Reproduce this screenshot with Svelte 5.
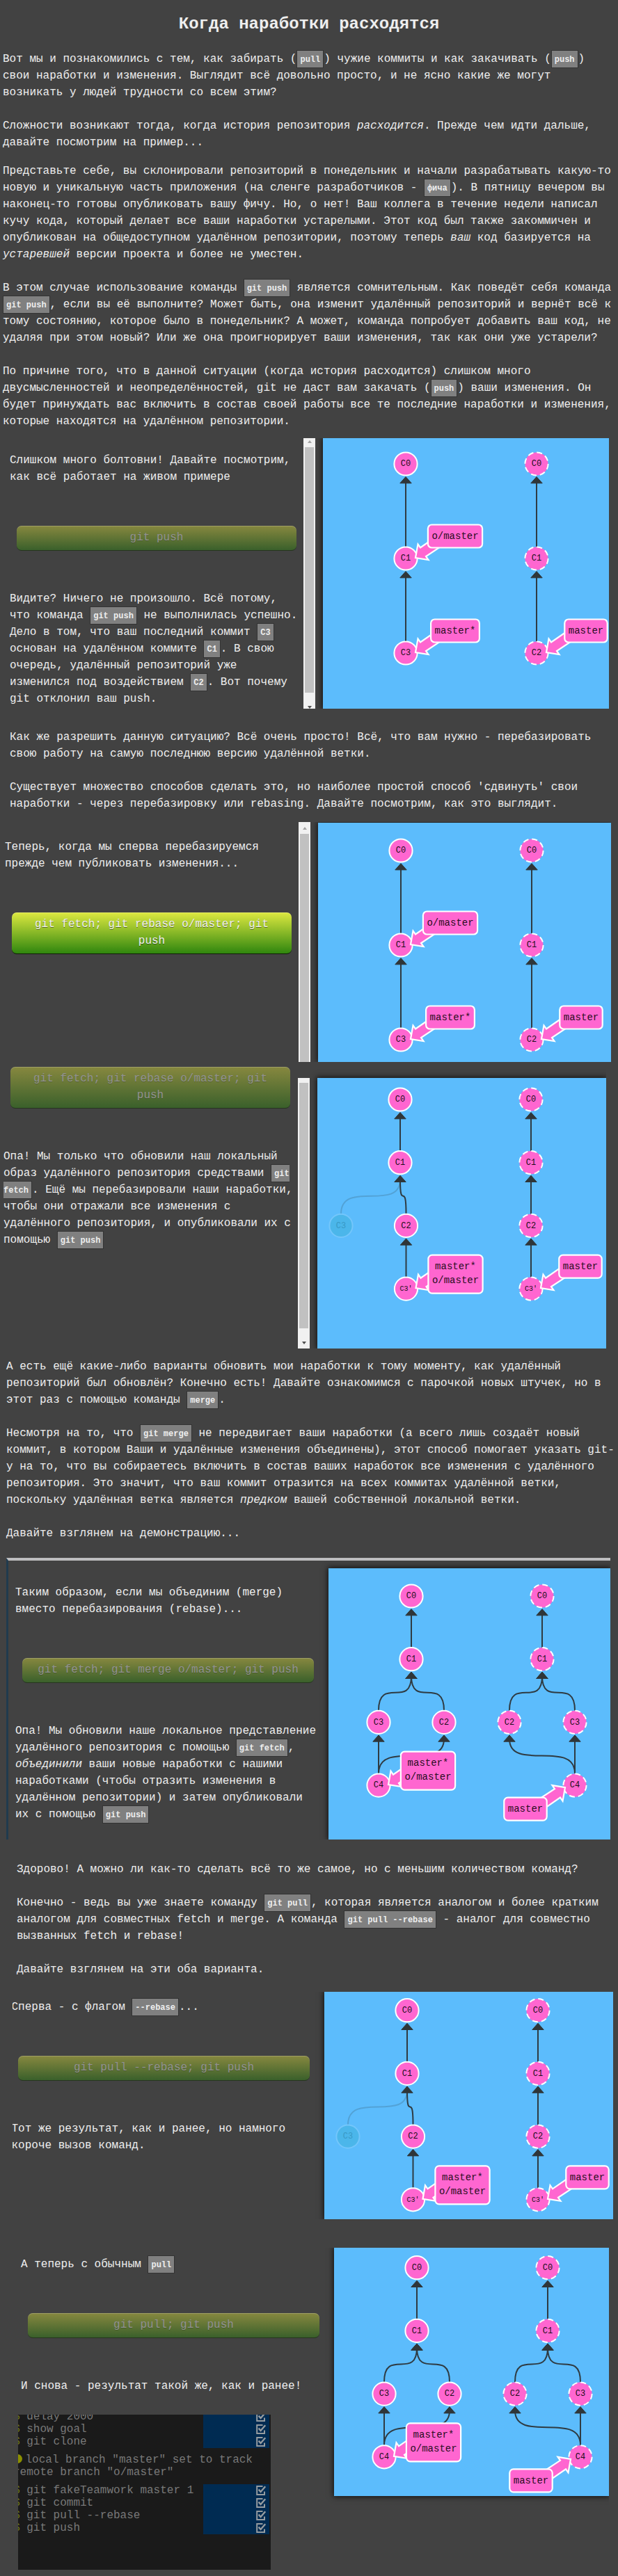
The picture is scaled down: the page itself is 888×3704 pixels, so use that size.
<script>
  const solid = (x, y, label) => ({ x, y, label });
  const dashed = (x, y, label) => ({ x, y, label, dash: true });

  // Both histories still diverged: three commits on each side.
  function diverged(y0) {
    const ys = [y0, y0 + 136, y0 + 272];
    return {
      nodes: [
        solid(119, ys[0], 'C0'), solid(119, ys[1], 'C1'), solid(119, ys[2], 'C3'),
        dashed(307, ys[0], 'C0'), dashed(307, ys[1], 'C1'), dashed(307, ys[2], 'C2')
      ],
      edges: [[1, 0], [2, 1], [4, 3], [5, 4]],
      tags: [
        { at: 1, lines: ['o/master'] },
        { at: 2, lines: ['master*'] },
        { at: 5, lines: ['master'] }
      ]
    };
  }

  function rebased(y0) {
    const s = 90.7;
    return {
      nodes: [
        solid(119, y0, 'C0'), solid(119, y0 + s, 'C1'),
        { x: 34, y: y0 + 2 * s, label: 'C3', ghost: true },
        solid(127.5, y0 + 2 * s, 'C2'), solid(127.5, y0 + 3 * s, "C3'"),
        dashed(307, y0, 'C0'), dashed(307, y0 + s, 'C1'),
        dashed(307, y0 + 2 * s, 'C2'), dashed(307, y0 + 3 * s, "C3'")
      ],
      edges: [[2, 1], [1, 0], [3, 1], [4, 3], [6, 5], [7, 6], [8, 7]],
      tags: [
        { at: 4, lines: ['master*', 'o/master'] },
        { at: 8, lines: ['master'] }
      ]
    };
  }

  function merged(y0) {
    const s = 90.7;
    return {
      nodes: [
        solid(119, y0, 'C0'), solid(119, y0 + s, 'C1'),
        solid(72, y0 + 2 * s, 'C3'), solid(166, y0 + 2 * s, 'C2'), solid(72, y0 + 3 * s, 'C4'),
        dashed(307, y0, 'C0'), dashed(307, y0 + s, 'C1'),
        dashed(260, y0 + 2 * s, 'C2'), dashed(354, y0 + 2 * s, 'C3'), dashed(354, y0 + 3 * s, 'C4')
      ],
      edges: [[1, 0], [2, 1], [3, 1], [4, 2], [4, 3], [6, 5], [7, 6], [8, 6], [9, 7], [9, 8]],
      tags: [
        { at: 4, lines: ['master*', 'o/master'] },
        { at: 9, lines: ['master'], flip: true }
      ]
    };
  }

  function edgePath(c, p) {
    const a = c.y - 17;
    const b = p.y + 24;
    if (c.x === p.x) return `M${c.x},${a}L${p.x},${b}`;
    return `M${c.x},${a}C${c.x},${a - 50} ${p.x},${b + 48} ${p.x},${b}`;
  }

  const tagWidth = (t) => Math.max(...t.lines.map((l) => l.length)) * 8.4 + 11;

  const sign = '$';
</script>

{#snippet graph(g, w, h)}
  <svg class="graph" width={w} height={h} viewBox="0 0 {w} {h}">
    {#each g.edges as [c, p]}
      {@const child = g.nodes[c]}
      {@const parent = g.nodes[p]}
      <path class="edge" class:faint={child.ghost} d={edgePath(child, parent)} />
      {#if !child.ghost}
        <path class="head" d="M{parent.x},{parent.y + 18.5}l8.2,9.3h-16.4z" />
      {/if}
    {/each}
    {#each g.nodes as n}
      <circle class="node" class:dash={n.dash} class:ghost={n.ghost} cx={n.x} cy={n.y} r="16.6" />
      <text class="id" class:small={n.label.length > 2} class:dim={n.ghost} x={n.x} y={n.y + 3.2}>{n.label}</text>
    {/each}
    {#each g.tags as t}
      {@const n = g.nodes[t.at]}
      {@const tw = tagWidth(t)}
      {@const cx = n.x + (t.flip ? -71 : 71)}
      {@const cy = n.y + (t.flip ? 34 : -32)}
      <path
        class="pointer"
        transform="translate({n.x} {n.y + (t.flip ? 2 : 0)}) {t.flip ? 'rotate(180)' : ''}"
        d="M14,-1L17.5,-20.5L21,-15.5L42,-30L54,-19.5L29,-3L32.5,2Z"
      />
      <rect class="tag" x={cx - tw / 2} y={cy - 16.5} width={tw} height={33 + (t.lines.length - 1) * 22} rx="5.5" />
      {#each t.lines as line, i}
        <text class="ref" x={cx} y={cy + 4 + i * 20}>{line}</text>
      {/each}
    {/each}
  </svg>
{/snippet}

{#snippet check()}
  <svg class="check" width="16" height="16" viewBox="0 0 16 16">
    <path d="M10.5,2H2.2V14H13V9.5" />
    <path class="tick" d="M4.6,6.6L7.6,10L14.2,2.2" />
  </svg>
{/snippet}

{#snippet command(text)}
  <div class="row">
    <span class="prompt">{sign}</span><span class="cmd">{text}</span>
    <span class="status">{@render check()}</span>
  </div>
{/snippet}

<main>
  <h1>Когда наработки расходятся</h1>

  <div class="intro">
    <p>Вот мы и познакомились с тем, как забирать (<code>pull</code>) чужие коммиты и как закачивать (<code>push</code>)<br />
      свои наработки и изменения. Выглядит всё довольно просто, и не ясно какие же могут<br />
      возникать у людей трудности со всем этим?</p>
    <p>Сложности возникают тогда, когда история репозитория <em>расходится</em>. Прежде чем идти дальше,<br />
      давайте посмотрим на пример...</p>
    <p class="tight">Представьте себе, вы склонировали репозиторий в понедельник и начали разрабатывать какую-то<br />
      новую и уникальную часть приложения (на сленге разработчиков - <code>фича</code>). В пятницу вечером вы<br />
      наконец-то готовы опубликовать вашу фичу. Но, о нет! Ваш коллега в течение недели написал<br />
      кучу кода, который делает все ваши наработки устарелыми. Этот код был также закоммичен и<br />
      опубликован на общедоступном удалённом репозитории, поэтому теперь <em>ваш</em> код базируется на<br />
      <em>устаревшей</em> версии проекта и более не уместен.</p>
    <p>В этом случае использование команды <code>git push</code> является сомнительным. Как поведёт себя команда<br />
      <code>git push</code>, если вы её выполните? Может быть, она изменит удалённый репозиторий и вернёт всё к<br />
      тому состоянию, которое было в понедельник? А может, команда попробует добавить ваш код, не<br />
      удаляя при этом новый? Или же она проигнорирует ваши изменения, так как они уже устарели?</p>
    <p>По причине того, что в данной ситуации (когда история расходится) слишком много<br />
      двусмысленностей и неопределённостей, git не даст вам закачать (<code>push</code>) ваши изменения. Он<br />
      будет принуждать вас включить в состав своей работы все те последние наработки и изменения,<br />
      которые находятся на удалённом репозитории.</p>
  </div>

  <section class="demo first">
    <div class="side">
      <p>Слишком много болтовни! Давайте посмотрим,<br />как всё работает на живом примере</p>
      <button disabled>git push</button>
      <p>Видите? Ничего не произошло. Всё потому,<br />
        что команда <code>git push</code> не выполнилась успешно.<br />
        Дело в том, что ваш последний коммит <code>C3</code><br />
        основан на удалённом коммите <code>C1</code>. В свою<br />
        очередь, удалённый репозиторий уже<br />
        изменился под воздействием <code>C2</code>. Вот почему<br />
        git отклонил ваш push.</p>
    </div>
    <div class="bar"><i class="up"></i><b></b><i class="down"></i></div>
    <div class="panel">{@render graph(diverged(37), 411, 389)}</div>
  </section>

  <div class="solve">
    <p>Как же разрешить данную ситуацию? Всё очень просто! Всё, что вам нужно - перебазировать<br />
      свою работу на самую последнюю версию удалённой ветки.</p>
    <p>Существует множество способов сделать это, но наиболее простой способ 'сдвинуть' свои<br />
      наработки - через перебазировку или rebasing. Давайте посмотрим, как это выглядит.</p>
  </div>

  <section class="demo before">
    <div class="side">
      <p>Теперь, когда мы сперва перебазируемся<br />прежде чем публиковать изменения...</p>
      <button>git fetch; git rebase o/master; git<br />push</button>
    </div>
    <div class="bar"><i class="up"></i><b></b></div>
    <div class="panel">{@render graph(diverged(40), 421, 344)}</div>
  </section>

  <section class="demo after">
    <div class="side">
      <button disabled>git fetch; git rebase o/master; git<br />push</button>
      <p>Опа! Мы только что обновили наш локальный<br />
        образ удалённого репозитория средствами <code>git<br />fetch</code>. Ещё мы перебазировали наши наработки,<br />
        чтобы они отражали все изменения с<br />
        удалённого репозитория, и опубликовали их с<br />
        помощью <code>git push</code></p>
    </div>
    <div class="bar"><b></b><i class="down"></i></div>
    <div class="panel">{@render graph(rebased(31), 415, 389)}</div>
  </section>

  <div class="options">
    <p>А есть ещё какие-либо варианты обновить мои наработки к тому моменту, как удалённый<br />
      репозиторий был обновлён? Конечно есть! Давайте ознакомимся с парочкой новых штучек, но в<br />
      этот раз с помощью команды <code>merge</code>.</p>
    <p>Несмотря на то, что <code>git merge</code> не передвигает ваши наработки (а всего лишь создаёт новый<br />
      коммит, в котором Ваши и удалённые изменения объединены), этот способ помогает указать git-<br />
      у на то, что вы собираетесь включить в состав ваших наработок все изменения с удалённого<br />
      репозитория. Это значит, что ваш коммит отразится на всех коммитах удалённой ветки,<br />
      поскольку удалённая ветка является <em>предком</em> вашей собственной локальной ветки.</p>
    <p>Давайте взглянем на демонстрацию...</p>
  </div>

  <section class="demo merge">
    <div class="side">
      <p>Таким образом, если мы объединим (merge)<br />вместо перебазирования (rebase)...</p>
      <button disabled>git fetch; git merge o/master; git push</button>
      <p>Опа! Мы обновили наше локальное представление<br />
        удалённого репозитория с помощью <code>git fetch</code>,<br />
        <em>объединили</em> ваши новые наработки с нашими<br />
        наработками (чтобы отразить изменения в<br />
        удалённом репозитории) и затем опубликовали<br />
        их с помощью <code>git push</code></p>
    </div>
    <div class="panel">{@render graph(merged(40), 405, 390)}</div>
  </section>

  <div class="shorter">
    <p>Здорово! А можно ли как-то сделать всё то же самое, но с меньшим количеством команд?</p>
    <p>Конечно - ведь вы уже знаете команду <code>git pull</code>, которая является аналогом и более кратким<br />
      аналогом для совместных fetch и merge. А команда <code>git pull --rebase</code> - аналог для совместно<br />
      вызванных fetch и rebase!</p>
    <p>Давайте взглянем на эти оба варианта.</p>
  </div>

  <section class="demo flag">
    <div class="side">
      <p>Сперва - с флагом <code>--rebase</code>...</p>
      <button disabled>git pull --rebase; git push</button>
      <p>Тот же результат, как и ранее, но намного<br />короче вызов команд.</p>
    </div>
    <div class="panel">{@render graph(rebased(26.7), 415, 327)}</div>
  </section>

  <section class="demo plain">
    <div class="side">
      <p>А теперь с обычным <code>pull</code></p>
      <button disabled>git pull; git push</button>
      <p>И снова - результат такой же, как и ранее!</p>
      <div class="terminal">
        {@render command('delay 2000')}
        {@render command('show goal')}
        {@render command('git clone')}
        <div class="note"><span class="dot"></span>local branch "master" set to track<br />remote branch "o/master"</div>
        {@render command('git fakeTeamwork master 1')}
        {@render command('git commit')}
        {@render command('git pull --rebase')}
        {@render command('git push')}
      </div>
    </div>
    <div class="panel">{@render graph(merged(28.7), 395, 357)}</div>
  </section>
</main>

<style>
  :global(body) {
    background: #424242;
  }

  main {
    width: 888px;
    height: 3704px;
    overflow: hidden;
    box-sizing: border-box;
    padding-top: 20px;
    background: #424242;
    color: #eee;
    font: 16px/24px "Courier New", "Liberation Mono", monospace;
    white-space: nowrap;
  }

  h1 {
    margin: 0 0 23px;
    font-size: 24px;
    line-height: 30px;
    text-align: center;
  }

  p {
    margin: 0;
  }

  p + p {
    margin-top: 24px;
  }

  p.tight {
    margin-top: 17px;
  }

  code {
    padding: 6px 4px 4px;
    border: 1px solid #333;
    background: #808080;
    color: #eee;
    font: bold 12px/12px "Liberation Mono", monospace;
  }

  .intro {
    padding-left: 4px;
  }

  .solve {
    margin: 29px 0 14px;
    padding-left: 14px;
  }

  .options {
    margin: 14px 0 23px;
    padding-left: 9px;
  }

  .shorter {
    margin: 31px 0 20px;
    padding-left: 24px;
  }

  .demo {
    display: grid;
    overflow: hidden;
  }

  .side {
    overflow: hidden;
    box-sizing: border-box;
  }

  button {
    display: block;
    box-sizing: border-box;
    width: 402px;
    padding: 5px 0 6px;
    border: 0;
    border-bottom: 1px solid #101c08;
    border-radius: 7px;
    background: linear-gradient(#dde840, #2f860e);
    box-shadow: inset 0 1px 0 rgba(255, 255, 255, 0.2);
    color: #f0f0f0;
    font: inherit;
    text-align: center;
    text-shadow: 0 1px 0 rgba(0, 0, 0, 0.45);
  }

  button:disabled {
    border-bottom-color: #26341f;
    background: linear-gradient(#87883f, #3a602b);
    color: #929292;
    text-shadow: 0 1px 0 rgba(0, 0, 0, 0.2);
  }

  .panel {
    align-self: start;
    background: #5cbcfc;
    box-shadow: 0 0 8px 1px rgba(0, 0, 0, 0.75);
  }

  .graph {
    display: block;
  }

  .bar {
    display: flex;
    flex-direction: column;
    align-items: center;
    box-sizing: border-box;
    background: #f1f1f1;
  }

  .bar b {
    width: 13px;
    background: #c1c1c1;
  }

  .up,
  .down {
    border: solid transparent;
    border-width: 0 3.5px;
  }

  .up {
    border-bottom: 4px solid #a3a3a3;
  }

  .down {
    border-top: 4px solid #505050;
  }

  .first {
    grid-template-columns: 436px 17px 422px;
    width: 875px;
    height: 389px;
    margin-top: 12px;
  }

  .first .panel {
    margin-left: 11px;
  }

  .first .side {
    padding: 20px 0 0 14px;
  }

  .first button {
    margin: 58px 0 57px 10px;
  }

  .first .up {
    margin: 3px 0 6px;
  }

  .first b {
    height: 353px;
  }

  .first .down {
    margin-top: 19px;
  }

  .before {
    grid-template-columns: 429px 17px 432px;
    width: 878px;
    height: 345px;
  }

  .before .side {
    padding: 24px 0 0 7px;
  }

  .before .panel {
    margin: 1px 0 0 11px;
    height: 344px;
  }

  .before button {
    margin: 58px 0 0 10px;
  }

  .before .up {
    margin: 7px 0 6px;
  }

  .before b {
    flex: 1;
  }

  .after {
    grid-template-columns: 428px 17px 426px;
    width: 871px;
    height: 412px;
  }

  .after .side {
    padding: 7px 0 0 5px;
  }

  .after button {
    margin: 0 0 57px 10px;
  }

  .after .bar {
    margin-top: 23px;
    padding-top: 7px;
  }

  .after b {
    height: 353px;
  }

  .after .down {
    margin-top: 19px;
  }

  .after .panel {
    margin: 23px 0 0 11px;
  }

  .merge {
    grid-template-columns: 460px 405px;
    box-sizing: border-box;
    width: 868px;
    height: 405px;
    margin-left: 9px;
    border-top: 4px solid #bdbdbf;
    border-left: 3px solid #203b4e;
  }

  .merge .side {
    padding: 34px 0 0 10px;
  }

  .merge button {
    width: 419px;
    margin: 58px 0 57px 10px;
  }

  .merge .panel {
    margin-top: 11px;
  }

  .flag {
    grid-template-columns: 448px 415px;
    width: 863px;
    height: 327px;
    margin-left: 18px;
  }

  .flag .side {
    padding-top: 10px;
  }

  .flag p {
    margin-left: -1.5px;
  }

  .flag button {
    width: 419px;
    margin: 58px 0 57px 8px;
  }

  .plain {
    grid-template-columns: 454px 395px;
    width: 849px;
    height: 463px;
    margin: 41px 0 0 26px;
  }

  .plain .side {
    padding-top: 12px;
  }

  .plain p {
    margin-left: 4px;
  }

  .plain button {
    width: 419px;
    margin: 58px 0 57px 14px;
  }

  .terminal {
    overflow: hidden;
    box-sizing: border-box;
    width: 363px;
    height: 223px;
    margin-top: 29px;
    padding-right: 2px;
    background: #1a1a1a;
    color: #787878;
    line-height: 18px;
  }

  .row {
    display: flex;
    height: 18px;
  }

  .row:first-child {
    margin-top: -6px;
  }

  .prompt {
    width: 19.2px;
    margin-left: -7px;
    color: #737b16;
  }

  .cmd {
    flex: 1;
  }

  .status {
    display: flex;
    justify-content: flex-end;
    align-items: center;
    box-sizing: border-box;
    width: 95px;
    padding-right: 4px;
    background: #002b52;
  }

  .note {
    height: 36px;
    margin: 8px 0 8px -7px;
  }

  .dot {
    display: inline-block;
    width: 13px;
    height: 13px;
    margin-right: 4.5px;
    border-radius: 50%;
    background: #8c8f00;
    vertical-align: -1px;
  }

  .check path {
    fill: none;
    stroke: #959ba0;
    stroke-width: 2;
  }

  .check .tick {
    stroke-width: 2.4;
  }

  .edge {
    fill: none;
    stroke: #2f3b42;
    stroke-width: 2;
  }

  .faint {
    opacity: 0.2;
  }

  .head {
    fill: #2f3639;
    stroke: #2f3639;
    stroke-linejoin: round;
  }

  .node {
    fill: #ff66d0;
    stroke: #fff;
    stroke-width: 2;
  }

  .dash {
    stroke-dasharray: 8 5;
  }

  .ghost {
    fill: #4bb6ea;
    stroke: #73c6fb;
  }

  .id {
    fill: #1c0d18;
    font-size: 12px;
    text-anchor: middle;
  }

  .small {
    font-size: 10px;
  }

  .dim {
    fill: #3999c6;
  }

  .pointer,
  .tag {
    fill: #ff66d0;
    stroke: #fff;
    stroke-width: 2.2;
  }

  .ref {
    fill: #2a0d22;
    font-size: 14px;
    text-anchor: middle;
  }
</style>
